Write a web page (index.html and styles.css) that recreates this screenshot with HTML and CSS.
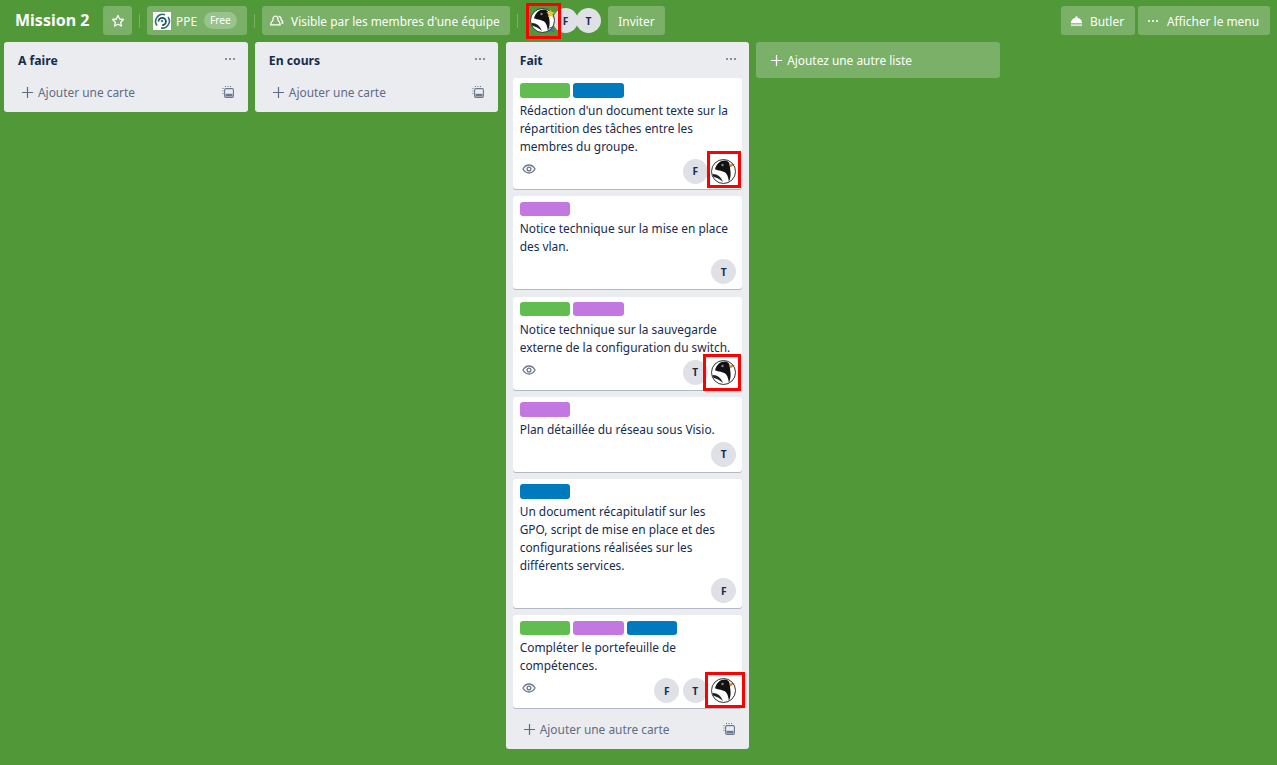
FILE: index.html
```html
<!DOCTYPE html>
<html lang="fr">
<head>
<meta charset="utf-8">
<title>Mission 2</title>
<link rel="stylesheet" href="styles.css">
</head>
<body>
<svg class="defs" width="0" height="0" aria-hidden="true">
  <defs>
    <symbol id="penguin" viewBox="0 0 25 25">
      <circle cx="12.5" cy="12.5" r="12" fill="#fff"/>
      <path d="M4 10.200C5.500 4.500 9.500 1.500 13.500 1.500c2.800 0 4.700 1.500 5.200 4l.5 5c.8 4 .6 8.500-1.400 12.500-.2-3.500-.8-6-2.800-8.800C12 11.500 7.500 11.800 4 10.200z" fill="#111"/>
      <path d="M1.500 15c4.500-.3 8.500 2.500 10.500 8-3.500-2.800-6.500-4.500-10-5.500z" fill="#222"/>
      <path d="M18 5.500l6-.8-4.300 3.700z" fill="#d98a26"/>
      <circle cx="11.500" cy="6" r="1.200" fill="#8a8a8a"/>
      <circle cx="12.500" cy="12.500" r="12" fill="none" stroke="#333" stroke-width="1"/>
    </symbol>
    <symbol id="eye" viewBox="0 0 14 14">
      <path d="M1 7c1.500-2.600 3.600-4 6-4s4.500 1.400 6 4c-1.500 2.600-3.600 4-6 4S2.500 9.600 1 7z" fill="none" stroke="#6b778c" stroke-width="1.300"/>
      <circle cx="7" cy="7" r="1.900" fill="none" stroke="#6b778c" stroke-width="1.300"/>
    </symbol>
    <symbol id="plus" viewBox="0 0 14 14">
      <path d="M7 1v12M1 7h12" stroke="currentColor" stroke-width="1.300" fill="none"/>
    </symbol>
    <symbol id="template" viewBox="0 0 12 12">
      <path d="M.5 2.500h1M.5 5h1M.5 7.500h1M3 .5h1M5.500 .5h1M8 .5h1" stroke="#6b778c" stroke-width="1"/>
      <rect x="2.600" y="2.600" width="8.800" height="8.800" rx="1.300" fill="none" stroke="#6b778c" stroke-width="1.100"/>
      <rect x="3.500" y="7.800" width="7" height="2.600" fill="#6b778c"/>
    </symbol>
    <symbol id="dots" viewBox="0 0 12 4">
      <circle cx="2" cy="2" r="1.050" fill="currentColor"/>
      <circle cx="6" cy="2" r="1.050" fill="currentColor"/>
      <circle cx="10" cy="2" r="1.050" fill="currentColor"/>
    </symbol>
  </defs>
</svg>

<header class="board-header">
  <h1 class="board-title">Mission 2</h1>
  <button class="hbtn hbtn-star" type="button" aria-label="Favori">
    <svg class="ico-star" viewBox="0 0 14 14"><path d="M7 1.500l1.700 3.500 3.800.5-2.800 2.700.7 3.800L7 10.200l-3.400 1.800.7-3.800L1.500 5.500l3.800-.5z" fill="none" stroke="#fff" stroke-width="1.300" stroke-linejoin="round"/></svg>
  </button>
  <span class="sep"></span>
  <button class="hbtn hbtn-team" type="button">
    <svg class="team-logo" viewBox="0 0 18 18">
      <rect width="18" height="18" fill="#fff"/>
      <path d="M4 13.500A7 7 0 0 1 12 2.800M15 5a7 7 0 0 1-7 11" fill="none" stroke="#2f6f78" stroke-width="1.600"/>
      <path d="M5.500 9.500a3.700 3.700 0 1 1 3.700 3.700" fill="none" stroke="#1f4e5a" stroke-width="1.800"/>
      <circle cx="9" cy="9" r="1.300" fill="#3b8b92"/>
    </svg>
    <span>PPE</span>
    <span class="pill">Free</span>
  </button>
  <span class="sep"></span>
  <button class="hbtn hbtn-visible" type="button">
    <svg class="ico-team" viewBox="0 0 14 14"><path d="M1.500 11c.2-2 1-3.300 2.100-4C3.400 5 4.200 3 6 3s2.600 2 2.400 4c1.100.7 1.900 2 2.100 4zM8.800 3.300c1.500-.3 2.600 1 2.500 2.900 1 .7 1.500 1.800 1.700 3.300h-1.500" fill="none" stroke="#fff" stroke-width="1.200" stroke-linejoin="round"/></svg>
    <span>Visible par les membres d'une équipe</span>
  </button>
  <span class="sep"></span>
  <div class="members">
    <span class="avatar avatar-penguin avatar-head">
      <svg class="penguin"><use href="#penguin"/></svg>
      <svg class="badge-star" viewBox="0 0 10 10"><path d="M5 .5l1.400 2.900 3.100.4-2.300 2.200.6 3.100L5 7.600 2.200 9.100l.6-3.100L.5 3.800l3.100-.4z" fill="#e6c83c"/></svg>
      <svg class="badge-up" viewBox="0 0 10 8"><path d="M1 3.500L5 1l4 2.500M1 7L5 4.500 9 7" fill="none" stroke="#3d55c9" stroke-width="1.200"/></svg>
      <i class="mark mark-head"></i>
    </span>
    <span class="avatar avatar-f-head">F</span>
    <span class="avatar avatar-t-head">T</span>
  </div>
  <button class="hbtn hbtn-invite" type="button">Inviter</button>
  <div class="header-right">
    <button class="hbtn hbtn-butler" type="button">
      <svg class="ico-bell" viewBox="0 0 14 12"><path d="M1 8.500C1 5 3.500 2.500 7 2.500S13 5 13 8.500z" fill="#fff"/><rect x="6" y="1" width="2" height="2" fill="#fff"/><rect x="1" y="9.500" width="12" height="2" fill="#fff" opacity=".7"/></svg>
      <span>Butler</span>
    </button>
    <button class="hbtn hbtn-menu" type="button">
      <svg class="ico-dots"><use href="#dots"/></svg>
      <span>Afficher le menu</span>
    </button>
  </div>
</header>

<main class="board">
  <section class="list">
    <div class="list-head"><h2>A faire</h2><svg class="ico-dots"><use href="#dots"/></svg></div>
    <div class="add-row"><svg class="ico-plus"><use href="#plus"/></svg><span>Ajouter une carte</span><svg class="ico-template"><use href="#template"/></svg></div>
  </section>

  <section class="list">
    <div class="list-head"><h2>En cours</h2><svg class="ico-dots"><use href="#dots"/></svg></div>
    <div class="add-row"><svg class="ico-plus"><use href="#plus"/></svg><span>Ajouter une carte</span><svg class="ico-template"><use href="#template"/></svg></div>
  </section>

  <section class="list">
    <div class="list-head"><h2>Fait</h2><svg class="ico-dots"><use href="#dots"/></svg></div>

    <article class="card">
      <div class="labels"><span class="label green"></span><span class="label blue"></span></div>
      <p>Rédaction d'un document texte sur la répartition des tâches entre les membres du groupe.</p>
      <div class="card-foot">
        <svg class="ico-eye"><use href="#eye"/></svg>
        <div class="card-members">
          <span class="avatar">F</span>
          <span class="avatar avatar-penguin"><svg class="penguin"><use href="#penguin"/></svg><i class="mark mark-a"></i></span>
        </div>
      </div>
    </article>

    <article class="card">
      <div class="labels"><span class="label purple"></span></div>
      <p>Notice technique sur la mise en place des vlan.</p>
      <div class="card-foot">
        <div class="card-members"><span class="avatar">T</span></div>
      </div>
    </article>

    <article class="card">
      <div class="labels"><span class="label green"></span><span class="label purple"></span></div>
      <p>Notice technique sur la sauvegarde externe de la configuration du switch.</p>
      <div class="card-foot">
        <svg class="ico-eye"><use href="#eye"/></svg>
        <div class="card-members">
          <span class="avatar">T</span>
          <span class="avatar avatar-penguin"><svg class="penguin"><use href="#penguin"/></svg><i class="mark mark-b"></i></span>
        </div>
      </div>
    </article>

    <article class="card">
      <div class="labels"><span class="label purple"></span></div>
      <p>Plan détaillée du réseau sous Visio.</p>
      <div class="card-foot">
        <div class="card-members"><span class="avatar">T</span></div>
      </div>
    </article>

    <article class="card">
      <div class="labels"><span class="label blue"></span></div>
      <p>Un document récapitulatif sur les GPO, script de mise en place et des configurations réalisées sur les différents services.</p>
      <div class="card-foot">
        <div class="card-members"><span class="avatar">F</span></div>
      </div>
    </article>

    <article class="card">
      <div class="labels"><span class="label green"></span><span class="label purple"></span><span class="label blue"></span></div>
      <p>Compléter le portefeuille de compétences.</p>
      <div class="card-foot">
        <svg class="ico-eye"><use href="#eye"/></svg>
        <div class="card-members">
          <span class="avatar">F</span>
          <span class="avatar">T</span>
          <span class="avatar avatar-penguin"><svg class="penguin"><use href="#penguin"/></svg><i class="mark mark-c"></i></span>
        </div>
      </div>
    </article>

    <div class="add-row"><svg class="ico-plus"><use href="#plus"/></svg><span>Ajouter une autre carte</span><svg class="ico-template"><use href="#template"/></svg></div>
  </section>

  <button class="add-list" type="button"><svg class="ico-plus"><use href="#plus"/></svg><span>Ajoutez une autre liste</span></button>
</main>
</body>
</html>
```
FILE: styles.css
```css
* { box-sizing: border-box; }
html, body { height: 100%; }
body {
  margin: 0;
  background: #519839;
  font-family: "Noto Sans", "Liberation Sans", sans-serif;
  font-size: 11.9px;
  line-height: 18px;
  color: #172b4d;
  overflow: hidden;
}
.defs { position: absolute; }
h1, h2, p { margin: 0; }
button { font: inherit; border: 0; color: inherit; }

.board-header {
  display: flex;
  align-items: center;
  height: 42px;
  padding: 0 7px 1px 15px;
}
.board-title {
  width: 74px;
  font-size: 16px;
  line-height: 29px;
  font-weight: 700;
  color: #fff;
  margin-right: 14px;
  white-space: nowrap;
}
.hbtn {
  display: flex;
  align-items: center;
  height: 29px;
  border-radius: 3px;
  background: rgba(255, 255, 255, .24);
  color: #fff;
  padding: 0;
  white-space: nowrap;
}
.hbtn-star { width: 29px; justify-content: center; }
.ico-star { width: 14px; height: 14px; }
.sep { width: 1px; height: 14px; margin: 0 7px; background: rgba(255, 255, 255, .24); }
.hbtn-team { width: 100px; padding-left: 6px; }
.team-logo { width: 18px; height: 18px; margin-right: 5px; }
.pill {
  margin-left: 7px;
  padding: 0 6px;
  height: 17px;
  line-height: 17px;
  border-radius: 9px;
  font-size: 10.2px;
  background: rgba(255, 255, 255, .24);
}
.hbtn-visible { width: 248px; padding-left: 7px; }
.ico-team { width: 15px; height: 15px; margin-right: 7px; }
.members { display: flex; margin-left: 4px; }
.avatar {
  position: relative;
  flex: none;
  display: flex;
  align-items: center;
  justify-content: center;
  width: 25px;
  height: 25px;
  border-radius: 50%;
  background: #dfe1e6;
  color: #172b4d;
  font-size: 10.2px;
  font-weight: 700;
}
.avatar-penguin { background: none; }
.avatar-head { z-index: 2; width: 26px; }
.avatar-f-head { margin-left: -2px; }
.avatar-t-head { margin-left: -2px; }
.penguin { width: 25px; height: 25px; display: block; }
.badge-star { position: absolute; right: 0; top: 1px; width: 9px; height: 9px; }
.badge-up { position: absolute; right: 0; bottom: 0; width: 8px; height: 7px; }
.mark { position: absolute; border: 3px solid #f00; pointer-events: none; }
.mark-head { left: -3px; right: -6px; top: -5px; bottom: -6px; }
.mark-a { left: -4px; right: -5px; top: -8px; bottom: -4px; }
.mark-b { left: -8px; right: -5px; top: -6px; bottom: -6px; }
.mark-c { left: -6px; right: -9px; top: -6px; bottom: -5px; }
.hbtn-invite { width: 57px; margin-left: 7px; justify-content: center; }
.header-right { margin-left: auto; display: flex; gap: 3px; }
.hbtn-butler { width: 74px; padding-left: 9px; }
.ico-bell { width: 13px; height: 12px; margin-right: 7px; }
.hbtn-menu { width: 132px; padding-left: 9px; }
.hbtn-menu .ico-dots { color: #fff; margin-right: 8px; }

.board {
  display: flex;
  align-items: flex-start;
  gap: 7.3px;
  padding-left: 4px;
}
.list {
  flex: none;
  width: 243.55px;
  background: #ebecf0;
  border-radius: 3px;
  padding: 0 7px 5.5px;
}
.list-head {
  display: flex;
  align-items: center;
  justify-content: space-between;
  height: 36px;
  padding: 1px 5px 0 7px;
}
.list-head h2 { font-size: 12.2px; font-weight: 700; line-height: 18px; }
.ico-dots { width: 12px; height: 4px; color: #6b778c; display: block; }
.list-head .ico-dots { margin-top: -3px; }
.add-row {
  display: flex;
  align-items: center;
  height: 28px;
  padding: 0 7px 0 10px;
  color: #5e6c84;
}
.card + .add-row { margin-top: -.4px; }
.add-row span { flex: 1; margin-left: 4px; }
.ico-plus { width: 13px; height: 13px; flex: none; }
.ico-template { width: 12px; height: 12px; flex: none; }

.card {
  background: #fff;
  border-radius: 3px;
  box-shadow: 0 1px 0 rgba(9, 30, 66, .25);
  margin-bottom: 7.3px;
  padding: 5.4px 7px 5px;
}
.labels { display: flex; gap: 3.2px; height: 14.4px; margin-bottom: 3.2px; }
.label { width: 50.4px; height: 14.4px; border-radius: 3px; }
.green { background: #61bd4f; }
.purple { background: #c377e0; }
.blue { background: #0079bf; }
.card-foot {
  display: flex;
  align-items: flex-start;
  height: 25px;
  margin-top: 4px;
}
.ico-eye { width: 14px; height: 14px; margin: 3px 0 0 2px; }
.card-members { margin-left: auto; display: flex; gap: 3.5px; margin-right: -1px; }

.add-list {
  flex: none;
  display: flex;
  align-items: center;
  width: 243.55px;
  height: 36px;
  margin-left: -.4px;
  padding: 0 0 0 14px;
  background: rgba(255, 255, 255, .24);
  border-radius: 3px;
  color: #fff;
}
.add-list span { margin-left: 4px; }
```
